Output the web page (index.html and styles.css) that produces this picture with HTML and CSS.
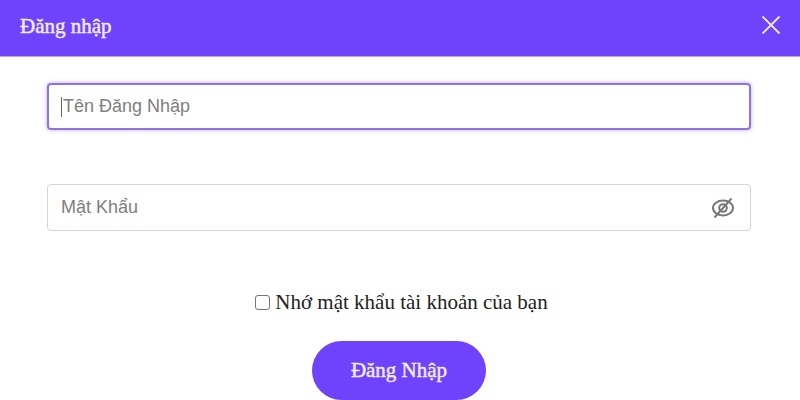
FILE: index.html
```html
<!DOCTYPE html>
<html lang="vi">
<head>
<meta charset="utf-8">
<title>Đăng nhập</title>
<link rel="stylesheet" href="styles.css">
</head>
<body>
<div class="modal">
  <header class="head">
    <span class="title">Đăng nhập</span>
    <svg class="close" viewBox="0 0 20 20" width="20" height="20" aria-hidden="true"><path d="M1.5 1.5L18.5 18.5M18.5 1.5L1.5 18.5"/></svg>
  </header>
  <form class="form">
    <div class="field focus"><span class="caret"></span><span class="ph">Tên Đăng Nhập</span></div>
    <div class="field second"><span class="ph">Mật Khẩu</span>
      <svg class="eye" viewBox="0 0 24 24" width="24" height="24" aria-hidden="true">
        <ellipse cx="12" cy="12" rx="10" ry="7.5"/>
        <circle cx="12" cy="12" r="3.8"/>
        <path d="M3.5 21.5L20.5 2.5"/>
      </svg>
    </div>
    <label class="remember"><span class="box"></span>Nhớ mật khẩu tài khoản của bạn</label>
    <button class="submit" type="button">Đăng Nhập</button>
  </form>
</div>
</body>
</html>
```
FILE: styles.css
```css
html, body { margin: 0; padding: 0; }
body { width: 800px; height: 400px; overflow: hidden; background: #fff; }
.modal { display: flex; flex-direction: column; height: 400px; }
.head {
  height: 57px; flex: none; background: #6f42fb; color: #f3ecff;
  display: flex; align-items: center; justify-content: space-between;
  padding: 0 19px 0 20px; border-bottom: 1px solid #b9a4f5; box-sizing: border-box;
}
.title { font: 21px/1 "Liberation Serif", serif; margin-top: -3px; -webkit-text-stroke: 0.45px #f3ecff; }
.close { fill: none; stroke: #efe8ff; stroke-width: 1.8; margin-top: -7px; }
.form { display: flex; flex-direction: column; padding: 26px 49px 0 47px; }
.field {
  height: 47px; box-sizing: border-box; border: 1px solid #d5d5d8; border-radius: 4px;
  display: flex; align-items: center; padding: 0 15px 0 13px;
  font: 18px "Liberation Sans", sans-serif; color: #808080;
}
.field.focus { border: 2px solid #8f74df; padding-left: 12px; box-shadow: 0 0 4px rgba(111,66,251,.45); }
.second { margin-top: 54px; justify-content: space-between; }
.caret { width: 1px; height: 20px; background: #666; margin-right: 1px; }
.eye { fill: none; stroke: #777; stroke-width: 2; }
.remember {
  margin-top: 59px; display: flex; align-items: center; justify-content: center;
  font: 21px/24px "Liberation Serif", serif; color: #222; margin-left: 5px;
}
.box { width: 15px; height: 15px; box-sizing: border-box; border: 1.5px solid #767676; border-radius: 3px; margin-right: 5px; background: #fff; }
.submit {
  align-self: center; width: 174px; height: 59px; margin-top: 27px; border: 0; border-radius: 30px;
  background: #6f42fb; color: #f3ecff; font: 21px "Liberation Serif", serif; -webkit-text-stroke: 0.45px #f3ecff;
}
```
